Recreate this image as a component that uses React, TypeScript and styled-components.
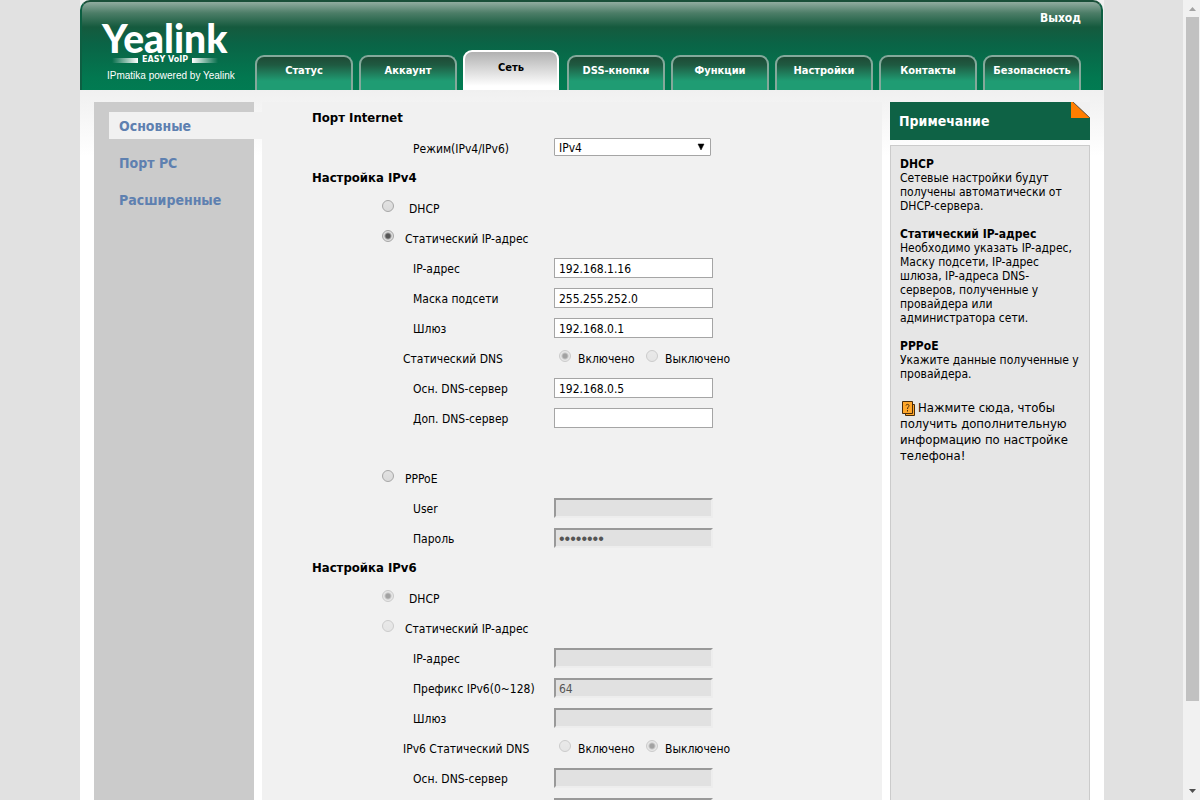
import React from "react";
import styled, { createGlobalStyle, css } from "styled-components";

const GlobalStyle = createGlobalStyle`
  * { box-sizing: border-box; }
  body { margin: 0; background: #e1e1e1; }
  body, input, select, button {
    font-family: "DejaVu Sans Condensed", "Noto Sans", sans-serif;
    font-size: 12px;
    color: #000;
  }
`;

const Screen = styled.div`
  display: flex;
  height: 100vh;
  overflow: hidden;
`;
const Viewport = styled.div`
  flex: 1;
  min-width: 0;
  overflow: hidden;
`;
const Page = styled.div`
  max-width: 1024px;
  min-height: 100vh;
  margin: 0 auto;
  background: linear-gradient(#f0f0f0 90px, #fff 156px);
`;

const Header = styled.header`
  display: flex;
  height: 90px;
  margin-right: 1px;
  border: solid #1a4f38;
  border-width: 2px 2px 0;
  border-left-color: #0d5f42;
  border-right-color: #0d5f42;
  border-radius: 10px 10px 0 0;
  background: linear-gradient(#91ac9f, #4c7d67 11px, #155a3e 25px, #0a6446 42px, #027850 76px, #017b52);
`;
const Brand = styled.div`
  width: 173px;
  padding: 21px 0 0 20px;
  color: #fff;
  white-space: nowrap;
`;
const BrandName = styled.div`
  margin-bottom: 3px;
  font-family: Lato, sans-serif;
  font-weight: 900;
  font-size: 39px;
  line-height: 30px;
`;
const BrandLine = styled.div`
  display: flex;
  align-items: center;
  gap: 4px;
  margin-left: 10px;
  font: bold 8px/8px "DejaVu Sans", sans-serif;
`;
const Fade = styled.span<{ $to: string }>`
  width: 26px;
  height: 5px;
  background: linear-gradient(to ${(p) => p.$to}, #fff, transparent);
`;
const Powered = styled.div`
  margin: 5px 0 0 5px;
  font: 10px/14px "Liberation Sans", sans-serif;
`;
const HeaderRight = styled.div`
  flex: 1;
  display: flex;
  flex-direction: column;
  justify-content: space-between;
`;
const Logout = styled.a`
  align-self: flex-end;
  margin: 8px 20px 0 0;
  color: #fff;
  font-weight: bold;
  line-height: 16px;
  text-decoration: none;
`;
const Tabs = styled.nav`
  display: flex;
  align-items: flex-end;
  gap: 6px;
`;
const Tab = styled.a<{ $active?: boolean }>`
  width: 98px;
  height: 35px;
  padding-top: 7px;
  border: 2px solid #84a99b;
  border-bottom: 0;
  border-radius: 9px 9px 0 0;
  background: linear-gradient(#1e4a35, #1f5a41 8px, #1f9c73 24px, #1f9c73);
  color: #fff;
  font-size: 11px;
  font-weight: bold;
  line-height: 14px;
  text-align: center;
  text-decoration: none;
  white-space: nowrap;
  ${(p) =>
    p.$active &&
    css`
      height: 40px;
      padding-top: 9px;
      width: 96px;
      margin-right: 2px;
      border-color: #fff;
      background: linear-gradient(#b1b1b1, #fff 34px);
      color: #000;
    `}
`;

const Columns = styled.div`
  display: flex;
  gap: 8px;
  padding: 12px 14px 0;
`;
const Side = styled.nav`
  display: flex;
  flex-direction: column;
  gap: 10px;
  width: 160px;
  padding: 10px 0 0 15px;
  background: #cbcbcb;
`;
const SideLink = styled.a<{ $active?: boolean }>`
  padding: 1px 0 0 10px;
  margin-right: -8px;
  background: ${(p) => (p.$active ? "#f1f1f1" : "none")};
  color: #5e80b0;
  font-size: 14px;
  font-weight: bold;
  line-height: 26px;
  text-decoration: none;
`;
const Form = styled.form`
  flex: 1;
  min-width: 0;
  padding: 1px 0 30px 50px;
  background: #f1f1f1;
`;
const Heading = styled.h2`
  margin: 0;
  font-size: 13px;
  line-height: 30px;
`;
const Row = styled.div`
  display: flex;
  align-items: center;
  height: 30px;
`;
const Label = styled.label<{ $outer?: boolean }>`
  width: 242px;
  padding: 2px 0 0 ${(p) => (p.$outer ? 91 : 101)}px;
  white-space: nowrap;
`;
const TextBox = styled.input`
  width: 159px;
  height: 20px;
  padding: 2px 4px 0;
  border: 1px solid #a5a5a5;
  background: #fff;
  &:disabled {
    padding: 1px 3px 0;
    border: 2px solid;
    border-color: #999 #ededed #ededed #999;
    background: #e1e1e1;
    color: #555;
  }
  &[type="password"] {
    font-family: "Liberation Sans", sans-serif;
    font-size: 16px;
  }
`;
const SelectWrap = styled.div`
  display: grid;
  align-items: center;
  width: 157px;
  margin-bottom: 2px;
  & > * { grid-area: 1 / 1; }
  & > svg { justify-self: end; margin-right: 6px; pointer-events: none; }
`;
const Select = styled.select`
  appearance: none;
  height: 18px;
  padding: 1px 4px 0;
  border: 1px solid #a5a5a5;
  border-radius: 1px;
  background: #fff;
`;
const Radio = styled.input.attrs({ type: "radio" })`
  appearance: none;
  width: 12px;
  height: 12px;
  margin: 0 0 4px;
  border: 1px solid #a6a6a6;
  border-radius: 50%;
  background: linear-gradient(#e2e2e2, #dadada);
  &:checked {
    background: radial-gradient(circle, #555 0 2px, #dedede 4px);
  }
  &:disabled { opacity: 0.5; }
`;
const Caption = styled.span`
  padding-top: 2px;
`;
const Choice = styled.label<{ $wide?: boolean }>`
  display: flex;
  align-items: center;
  gap: ${(p) => (p.$wide ? 15 : 11)}px;
  padding-left: 70px;
`;
const Option = styled.label`
  display: flex;
  align-items: center;
  gap: 7px;
  width: 87px;
  margin-left: 5px;
  white-space: nowrap;
  & + & { margin-left: 0; }
`;

const Aside = styled.aside`
  display: flex;
  flex-direction: column;
  gap: 5px;
  width: 200px;
`;
const NoteTitle = styled.h2`
  display: flex;
  justify-content: space-between;
  margin: 0;
  padding-left: 9px;
  background: #0e6245;
  color: #fff;
  font-size: 14px;
  line-height: 38px;
`;
const NoteBody = styled.div`
  flex: 1;
  padding: 11px 6px 11px 9px;
  border: 1px solid #cbcbcb;
  background: #e6e6e6;
  line-height: 14px;
`;
const NoteItem = styled.section`
  margin-bottom: 14px;
`;
const NoteName = styled.h3`
  margin: 0;
  font-size: 12px;
  line-height: 14px;
`;
const NoteText = styled.p`
  margin: 0;
`;
const HelpLink = styled.a`
  display: block;
  margin-top: 19px;
  color: #000;
  font-size: 13px;
  line-height: 16px;
  text-decoration: none;
  & > svg { margin: 0 2px; vertical-align: -4px; }
`;

const ScrollTrack = styled.div`
  display: flex;
  flex-direction: column;
  align-items: center;
  width: 16px;
  background: #f1f1f1;
  box-shadow: -1px 0 #f1f1f1;
`;
const ScrollArrow = styled.svg`
  width: 17px;
  height: 17px;
  flex: none;
`;
const ScrollThumb = styled.div`
  width: 13px;
  flex: 684;
  background: #c1c1c1;
`;
const ScrollRest = styled.div`
  flex: 82;
`;

const tabs = ["Статус", "Аккаунт", "Сеть", "DSS-кнопки", "Функции", "Настройки", "Контакты", "Безопасность"];
const sections = ["Основные", "Порт PC", "Расширенные"];
const notes = [
  ["DHCP", "Сетевые настройки будут получены автоматически от DHCP-сервера."],
  ["Статический IP-адрес", "Необходимо указать IP-адрес, Маску подсети, IP-адрес шлюза, IP-адреса DNS-серверов, полученные у провайдера или администратора сети."],
  ["PPPoE", "Укажите данные полученные у провайдера."],
];

type FieldProps = { id: string; label: string; value?: string; disabled?: boolean; type?: string };
function Field({ id, label, value = "", disabled, type = "text" }: FieldProps) {
  return (
    <Row>
      <Label htmlFor={id}>{label}</Label>
      <TextBox id={id} type={type} defaultValue={value} disabled={disabled} />
    </Row>
  );
}

type ModeProps = { name: string; label: string; checked?: boolean; disabled?: boolean; wide?: boolean };
function Mode({ name, label, checked, disabled, wide }: ModeProps) {
  return (
    <Row>
      <Choice $wide={wide}>
        <Radio name={name} defaultChecked={checked} disabled={disabled} />
        <Caption>{label}</Caption>
      </Choice>
    </Row>
  );
}

function DnsSwitch({ name, label, on }: { name: string; label: string; on: boolean }) {
  return (
    <Row role="radiogroup" aria-labelledby={name}>
      <Label as="span" id={name} $outer>{label}</Label>
      <Option><Radio name={name} defaultChecked={on} disabled /><Caption>Включено</Caption></Option>
      <Option><Radio name={name} defaultChecked={!on} disabled /><Caption>Выключено</Caption></Option>
    </Row>
  );
}

export default function App() {
  return (
    <Screen>
      <GlobalStyle />
      <Viewport>
        <Page>
          <Header>
            <Brand>
              <BrandName>Yealink</BrandName>
              <BrandLine><Fade $to="left" />EASY VoIP<Fade $to="right" /></BrandLine>
              <Powered>IPmatika powered by Yealink</Powered>
            </Brand>
            <HeaderRight>
              <Logout href="#">Выход</Logout>
              <Tabs>
                {tabs.map((t) => (
                  <Tab key={t} href="#" $active={t === "Сеть"}>{t}</Tab>
                ))}
              </Tabs>
            </HeaderRight>
          </Header>
          <Columns>
            <Side>
              {sections.map((s, i) => (
                <SideLink key={s} href="#" $active={i === 0}>{s}</SideLink>
              ))}
            </Side>
            <Form>
              <Heading>Порт Internet</Heading>
              <Row>
                <Label htmlFor="mode">Режим(IPv4/IPv6)</Label>
                <SelectWrap>
                  <Select id="mode"><option>IPv4</option></Select>
                  <svg width="8" height="8" viewBox="0 0 8 8"><path d="M1 1h6L4 7z" stroke="#000" strokeWidth="0.5" /></svg>
                </SelectWrap>
              </Row>
              <Heading>Настройка IPv4</Heading>
              <Mode name="v4" label="DHCP" wide />
              <Mode name="v4" label="Статический IP-адрес" checked />
              <Field id="ip4" label="IP-адрес" value="192.168.1.16" />
              <Field id="mask" label="Маска подсети" value="255.255.252.0" />
              <Field id="gw4" label="Шлюз" value="192.168.0.1" />
              <DnsSwitch name="dns4" label="Статический DNS" on />
              <Field id="dns4a" label="Осн. DNS-сервер" value="192.168.0.5" />
              <Field id="dns4b" label="Доп. DNS-сервер" />
              <Row />
              <Mode name="v4" label="PPPoE" />
              <Field id="user" label="User" disabled />
              <Field id="pass" label="Пароль" type="password" value="password" disabled />
              <Heading>Настройка IPv6</Heading>
              <Mode name="v6" label="DHCP" checked disabled wide />
              <Mode name="v6" label="Статический IP-адрес" disabled />
              <Field id="ip6" label="IP-адрес" disabled />
              <Field id="prefix" label="Префикс IPv6(0~128)" value="64" disabled />
              <Field id="gw6" label="Шлюз" disabled />
              <DnsSwitch name="dns6" label="IPv6 Статический DNS" on={false} />
              <Field id="dns6a" label="Осн. DNS-сервер" disabled />
              <Field id="dns6b" label="Доп. DNS-сервер" disabled />
            </Form>
            <Aside>
              <NoteTitle>
                Примечание
                <svg width="19" height="16" viewBox="0 0 19 16">
                  <path d="M2 0h17v16z" fill="#f1f1f1" />
                  <path d="M0 0h2l17 16H0z" fill="#ff7e00" />
                  <path d="M2 0l17 16" stroke="#6b5a4a" />
                </svg>
              </NoteTitle>
              <NoteBody>
                {notes.map(([name, text]) => (
                  <NoteItem key={name}>
                    <NoteName>{name}</NoteName>
                    <NoteText>{text}</NoteText>
                  </NoteItem>
                ))}
                <HelpLink href="#">
                  <svg width="14" height="15" viewBox="0 0 14 15">
                    <path d="M3.500 3.500h9v11h-9z" fill="#ffa72b" stroke="#4a2c0a" />
                    <path d="M.5.5h10v12H.5z" fill="#ffa72b" stroke="#4a2c0a" />
                    <path d="M4 4.500c0-1.500 3-1.500 3 0S5.500 6 5.500 8M5.500 9v1.500" fill="none" stroke="#4a2c0a" />
                  </svg>
                  Нажмите сюда, чтобы получить дополнительную информацию по настройке телефона!
                </HelpLink>
              </NoteBody>
            </Aside>
          </Columns>
        </Page>
      </Viewport>
      <ScrollTrack>
        <ScrollArrow viewBox="0 0 17 17"><path d="M5 11h7L8.500 7z" fill="#a3a3a3" /></ScrollArrow>
        <ScrollThumb />
        <ScrollRest />
        <ScrollArrow viewBox="0 0 17 17"><path d="M5 6h7L8.500 10z" fill="#505050" /></ScrollArrow>
      </ScrollTrack>
    </Screen>
  );
}
